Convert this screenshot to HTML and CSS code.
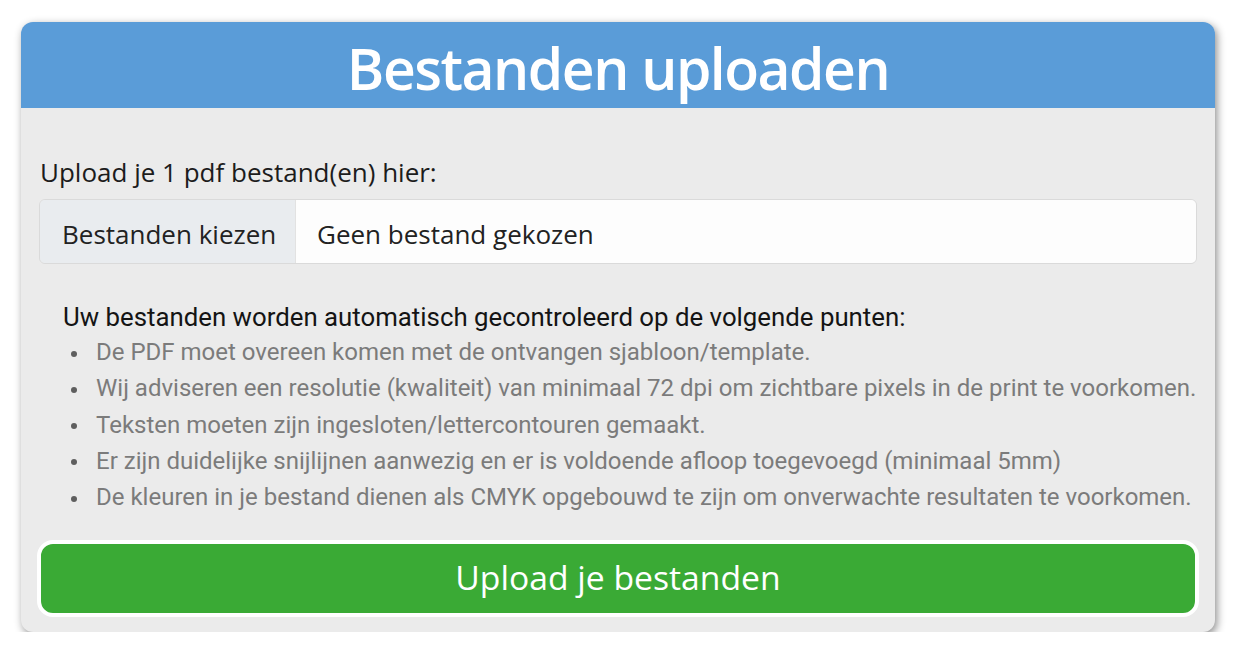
FILE: index.html
```html
<!DOCTYPE html>
<html lang="nl">
<head>
    <meta charset="UTF-8">
    <meta name="viewport" content="width=device-width, initial-scale=1.0">
    <title>Bestanden uploaden</title>
    <link rel="stylesheet" href="styles.css">
</head>
<body>
    <div class="upload-card">
        <div class="upload-header">
            <h1>Bestanden uploaden</h1>
        </div>
        <div class="upload-body">
            <label class="upload-label" for="fileInput">Upload je 1 pdf bestand(en) hier:</label>
            <div class="file-group">
                <span class="file-btn">Bestanden kiezen</span>
                <span class="file-name">Geen bestand gekozen</span>
            </div>

            <div class="check-info">
                <p class="check-title">Uw bestanden worden automatisch gecontroleerd op de volgende punten:</p>
                <ul class="check-list">
                    <li>De PDF moet overeen komen met de ontvangen sjabloon/template.</li>
                    <li>Wij adviseren een resolutie (kwaliteit) van minimaal 72 dpi om zichtbare pixels in de print te voorkomen.</li>
                    <li>Teksten moeten zijn ingesloten/lettercontouren gemaakt.</li>
                    <li>Er zijn duidelijke snijlijnen aanwezig en er is voldoende afloop toegevoegd (minimaal 5mm)</li>
                    <li>De kleuren in je bestand dienen als CMYK opgebouwd te zijn om onverwachte resultaten te voorkomen.</li>
                </ul>
            </div>

            <button class="upload-btn" type="button">Upload je bestanden</button>
        </div>
    </div>
</body>
</html>
```

FILE: styles.css
```css
body {
    margin: 0;
    background-color: #fff;
    font-family: "Open Sans", Arial, sans-serif;
}
.upload-card {
    width: 1194px;
    height: 610px;
    margin: 22px 0 0 21px;
    background-color: #ebebeb;
    border-radius: 12px;
    overflow: hidden;
    box-shadow: 2px 3px 8px rgba(0, 0, 0, 0.45);
}
.upload-header {
    height: 80px;
    padding-top: 6px;
    background-color: #5a9cd8;
    display: flex;
    justify-content: center;
    align-items: center;
}
.upload-header h1 {
    margin: 0;
    color: #fff;
    font-size: 57px;
    font-weight: 600;
    letter-spacing: -1.5px;
}
.upload-body {
    padding: 46px 18px 0 18px;
}
.upload-label {
    display: block;
    margin: 0 0 9px 1px;
    font-size: 26px;
    color: #1c1c1c;
    line-height: 36px;
}
.file-group {
    display: flex;
    height: 63px;
    border: 1px solid #dadada;
    border-radius: 6px;
    overflow: hidden;
    font-size: 26px;
    color: #222;
}
.file-btn {
    width: 233px;
    padding: 4px 0 0 22px;
    display: flex;
    align-items: center;
    background-color: #e9ecef;
    border-right: 1px solid #e2e2e2;
}
.file-name {
    flex: 1;
    padding: 4px 0 0 21px;
    display: flex;
    align-items: center;
    background-color: #fdfdfd;
}
.check-info {
    padding: 37px 0 0 24px;
    font-family: Roboto, Arial, sans-serif;
}
.check-title {
    margin: 0;
    font-size: 25.8px;
    color: #141414;
    line-height: 33px;
}
.check-list {
    margin: 0;
    padding-left: 8px;
    list-style: none;
    color: #7b7b7b;
    font-size: 24px;
    line-height: 36.25px;
}
.check-list li::before {
    content: "";
    display: inline-block;
    width: 6px;
    height: 6px;
    margin-right: 19px;
    border-radius: 50%;
    background-color: #5e5e5e;
    vertical-align: middle;
}
.upload-btn {
    display: block;
    width: calc(100% + 4px);
    height: 77px;
    margin: 25px 0 0 -2px;
    padding-bottom: 4px;
    background-color: #3aaa35;
    border: 4px solid #fff;
    border-radius: 16px;
    color: #fff;
    font-family: "Open Sans", Arial, sans-serif;
    font-size: 33.7px;
    cursor: pointer;
}
```
